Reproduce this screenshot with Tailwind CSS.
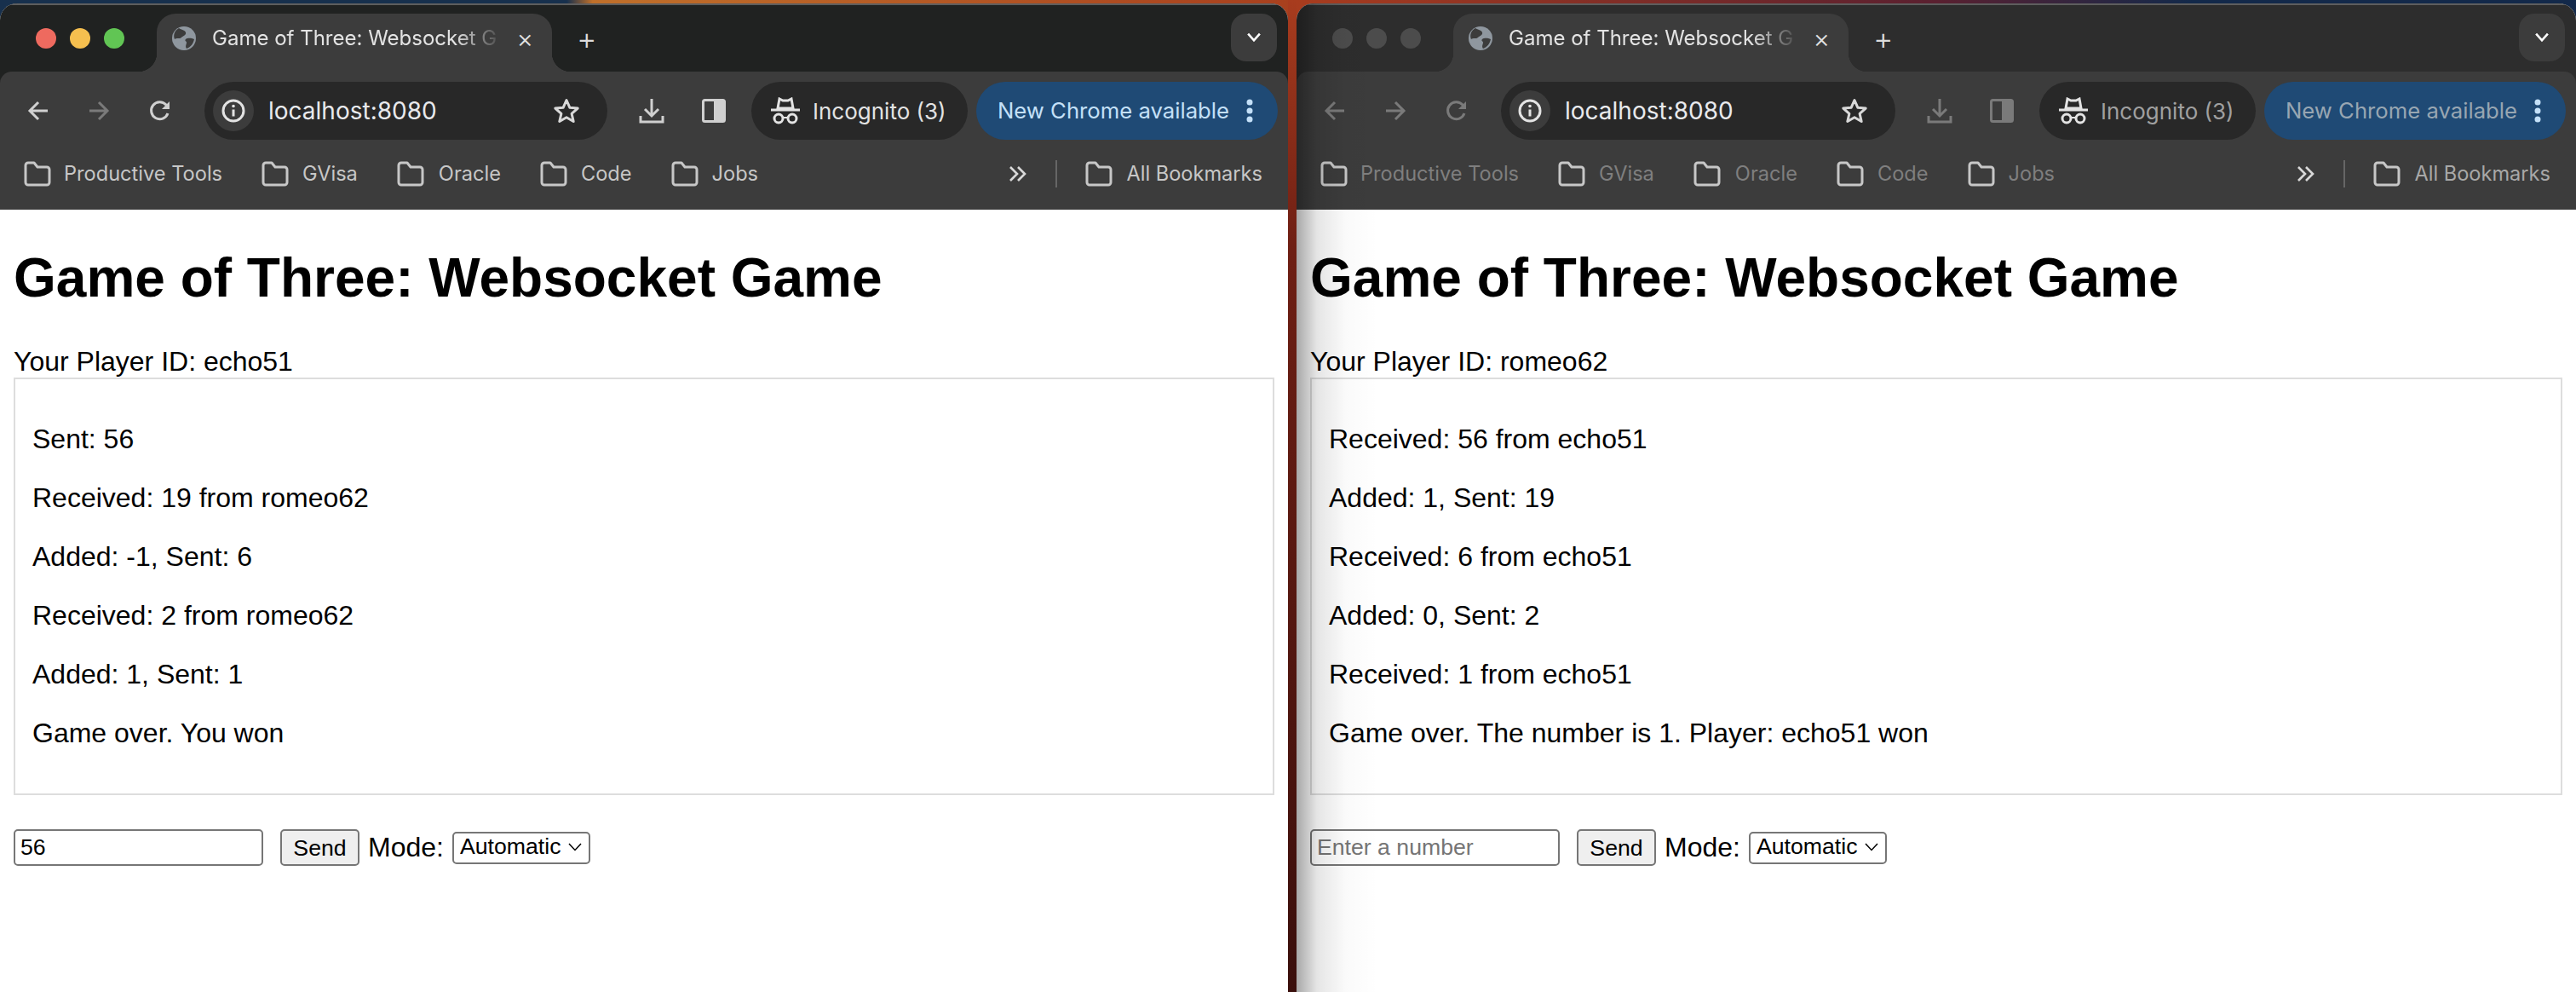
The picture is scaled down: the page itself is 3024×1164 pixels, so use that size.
<!DOCTYPE html>
<html lang="en">
<head>
    <meta charset="UTF-8">
    <title>Game of Three: Websocket Game</title>
    <script src="https://cdn.jsdelivr.net/npm/@tailwindcss/browser@4"></script>
</head>
<body class="bg-[#1b2f4a] overflow-hidden">
    <!-- icons shared by both windows -->
    <svg class="hidden">
        <symbol id="folder" viewBox="0 0 32 32"><path d="M2 6a3 3 0 0 1 3-3h7l4 5h11a3 3 0 0 1 3 3v15a3 3 0 0 1-3 3H5a3 3 0 0 1-3-3z" fill="none" stroke="currentColor" stroke-width="3" stroke-linejoin="round"/></symbol>
        <symbol id="globe" viewBox="0 0 28 28"><circle cx="14" cy="14" r="14" fill="#8f979f"/><path d="M8 2c3 2 7 2 8 5s-3 4-5 6-6 0-8 2C1 10 3 5 8 2zM16 15c3-2 7-1 10 0-1 5-4 9-9 11-2-3 0-5 0-7s-3-2-1-4z" fill="#3c3c3c"/></symbol>
        <symbol id="back" viewBox="0 0 28 28"><path d="M25 14H5M14 4 4 14l10 10" fill="none" stroke="currentColor" stroke-width="3"/></symbol>
        <symbol id="forward" viewBox="0 0 28 28"><path d="M3 14h20M14 4l10 10-10 10" fill="none" stroke="currentColor" stroke-width="3"/></symbol>
        <symbol id="reload" viewBox="0 0 28 28"><path d="M23 17a10 10 0 1 1-2-10l3 3" fill="none" stroke="currentColor" stroke-width="3"/><path d="M25 3v9h-9z" fill="currentColor"/></symbol>
        <symbol id="info" viewBox="0 0 28 28"><circle cx="14" cy="14" r="12" fill="none" stroke="currentColor" stroke-width="3"/><path d="M14 12.500v8" stroke="currentColor" stroke-width="3"/><circle cx="14" cy="8.500" r="1.800" fill="currentColor"/></symbol>
        <symbol id="star" viewBox="0 0 32 32"><path d="m16 3.500 3.800 8.700 9.400.9-7.100 6.200 2.100 9.200-8.200-4.800-8.200 4.800 2.100-9.200-7.100-6.200 9.400-.9z" fill="none" stroke="currentColor" stroke-width="3" stroke-linejoin="round"/></symbol>
        <symbol id="download" viewBox="0 0 32 32"><path d="M16 2v20M8 14l8 8 8-8M3 22v7h26v-7" fill="none" stroke="currentColor" stroke-width="3"/></symbol>
        <symbol id="panel" viewBox="0 0 28 28"><rect x="1.500" y="1.500" width="25" height="25" rx="2" fill="none" stroke="currentColor" stroke-width="3"/><rect x="14" y="2" width="12" height="24" fill="currentColor"/></symbol>
        <symbol id="incognito" viewBox="0 0 36 32"><path d="M9 13 11 2l4 2h6l4-2 2 11z" fill="none" stroke="currentColor" stroke-width="3"/><path d="M1 15h34" stroke="currentColor" stroke-width="3"/><circle cx="10" cy="25" r="5" fill="none" stroke="currentColor" stroke-width="3"/><circle cx="26" cy="25" r="5" fill="none" stroke="currentColor" stroke-width="3"/><path d="M15 24h6" stroke="currentColor" stroke-width="2"/></symbol>
        <symbol id="more" viewBox="0 0 8 28"><circle cx="4" cy="4" r="3.500" fill="currentColor"/><circle cx="4" cy="14" r="3.500" fill="currentColor"/><circle cx="4" cy="24" r="3.500" fill="currentColor"/></symbol>
        <symbol id="chev" viewBox="0 0 20 14"><path d="m2 2 8 9 8-9" fill="none" stroke="currentColor" stroke-width="3"/></symbol>
        <symbol id="chev-thin" viewBox="0 0 16 10"><path d="m1 1 7 7.500L15 1" fill="none" stroke="currentColor" stroke-width="1.500"/></symbol>
        <symbol id="dblchev" viewBox="0 0 24 20"><path d="m3 2 8 8-8 8M12 2l8 8-8 8" fill="none" stroke="currentColor" stroke-width="2.600"/></symbol>
    </svg>

    <div class="flex h-[1164px] w-[3024px]">
        <!-- left window -->
        <div class="w-[1512px] h-full flex flex-col pt-[4px] bg-[linear-gradient(to_right,#17304d_44%,#c0702a_46%,#a8401e)]">
            <div class="flex-1 flex flex-col bg-white rounded-t-[20px] overflow-hidden font-['Liberation_Sans',sans-serif] text-black">
                <div class="h-[242px] shrink-0 flex flex-col bg-[#202221] border-t-2 border-[#5e5e5e] font-['Inter',sans-serif]">
                    <div class="h-[78px] flex items-start pt-[10px] pl-[42px] pr-[13px] shrink-0">
                        <span class="w-6 h-6 mt-[17px] rounded-full bg-[#ee6a5f]"></span>
                        <span class="w-6 h-6 mt-[17px] ml-4 rounded-full bg-[#f5bf4f]"></span>
                        <span class="w-6 h-6 mt-[17px] ml-4 rounded-full bg-[#61c554]"></span>
                        <div class="relative ml-[38px] w-[464px] h-[68px] pl-[18px] pr-[22px] flex items-start pt-[15px] bg-[#3c3c3c] rounded-t-[22px]">
                            <span class="absolute -left-[22px] bottom-0 w-[22px] h-[22px] bg-[radial-gradient(circle_at_0_0,transparent_22px,#3c3c3c_22.500px)]"></span>
                            <span class="absolute -right-[22px] bottom-0 w-[22px] h-[22px] bg-[radial-gradient(circle_at_100%_0,transparent_22px,#3c3c3c_22.500px)]"></span>
                            <svg class="w-7 h-7 shrink-0"><use href="#globe"/></svg>
                            <span class="ml-[19px] w-[335px] whitespace-nowrap text-[24px] leading-[28px] text-[#e3e3e3] [mask-image:linear-gradient(to_right,black_85%,transparent_102%)]">Game of Three: Websocket G</span>
                            <span class="ml-auto text-[30px] leading-[28px] text-[#e3e3e3] font-light">×</span>
                        </div>
                        <span class="ml-[29px] mt-[11px] text-[36px] leading-[36px] font-light text-[#dddddd]">+</span>
                        <div class="ml-auto w-[54px] h-[56px] flex items-center justify-center rounded-[18px] bg-[#3c3c3c] text-white">
                            <svg class="w-[18px] h-[12px]"><use href="#chev"/></svg>
                        </div>
                    </div>
                    <div class="flex-1 flex flex-col bg-[#3c3c3c] rounded-t-[14px]">
                        <div class="h-[92px] shrink-0 flex items-center pl-[31px] pr-[12px] text-[#d0d0d0]">
                            <svg class="w-7 h-7"><use href="#back"/></svg>
                            <svg class="w-7 h-7 ml-[43px] text-[#7a7a7a]"><use href="#forward"/></svg>
                            <svg class="w-7 h-7 ml-[44px]"><use href="#reload"/></svg>
                            <div class="ml-[38px] w-[473px] h-[68px] flex items-center pl-[10px] pr-[32px] rounded-full bg-[#282828]">
                                <span class="w-[48px] h-[48px] flex items-center justify-center rounded-full bg-[#3c3c3c] text-[#e3e3e3]"><svg class="w-7 h-7"><use href="#info"/></svg></span>
                                <span class="ml-[17px] text-[28px] text-[#e8eaed]">localhost:8080</span>
                                <svg class="ml-auto w-8 h-8 text-[#d8d8d8]"><use href="#star"/></svg>
                            </div>
                            <svg class="ml-[36px] w-8 h-8"><use href="#download"/></svg>
                            <svg class="ml-[43px] w-7 h-7"><use href="#panel"/></svg>
                            <div class="ml-[30px] w-[254px] h-[68px] flex items-center pl-[22px] rounded-full bg-[#282828] text-[#e3e3e3]">
                                <svg class="w-9 h-8"><use href="#incognito"/></svg>
                                <span class="ml-[14px] text-[26px] whitespace-nowrap">Incognito (3)</span>
                            </div>
                            <div class="ml-[10px] flex-1 h-[68px] flex items-center pl-[25px] rounded-full bg-[#1f4a75] text-[#c4e0f8]">
                                <span class="text-[25.700px] whitespace-nowrap">New Chrome available</span>
                                <svg class="ml-[20px] w-2 h-7"><use href="#more"/></svg>
                            </div>
                        </div>
                        <div class="h-[56px] flex items-center pl-[28px] pr-[30px] text-[23.600px] text-[#c7c7c7] whitespace-nowrap">
                            <svg class="w-8 h-8"><use href="#folder"/></svg><span class="ml-[15px]">Productive Tools</span>
                            <svg class="w-8 h-8 ml-[46px]"><use href="#folder"/></svg><span class="ml-[16px]">GVisa</span>
                            <svg class="w-8 h-8 ml-[46px]"><use href="#folder"/></svg><span class="ml-[17px]">Oracle</span>
                            <svg class="w-8 h-8 ml-[46px]"><use href="#folder"/></svg><span class="ml-[16px]">Code</span>
                            <svg class="w-8 h-8 ml-[46px]"><use href="#folder"/></svg><span class="ml-[16px]">Jobs</span>
                            <svg class="ml-auto w-6 h-5 text-[#d8d8d8]"><use href="#dblchev"/></svg>
                            <span class="ml-[32px] w-[2px] h-8 bg-[#666666]"></span>
                            <svg class="w-8 h-8 ml-[33px]"><use href="#folder"/></svg><span class="ml-[16px]">All Bookmarks</span>
                        </div>
                    </div>
                </div>
                <div class="px-4">
                    <h1 class="mt-[43px] mb-[43px] text-[64px] leading-[74px] font-bold">Game of Three: Websocket Game</h1>
                    <div class="text-[32px] leading-[37px]">Your Player ID: echo51</div>
                    <div class="border-2 border-[#dddddd] px-5 py-[52px] flex flex-col gap-8 text-[32px] leading-[37px]">
                        <p>Sent: 56</p>
                        <p>Received: 19 from romeo62</p>
                        <p>Added: -1, Sent: 6</p>
                        <p>Received: 2 from romeo62</p>
                        <p>Added: 1, Sent: 1</p>
                        <p>Game over. You won</p>
                    </div>
                    <div class="mt-10 flex items-center">
                        <input type="text" value="56" placeholder="Enter a number" class="w-[293px] h-[43px] px-[6px] border-2 border-[#767676] rounded-[5px] text-[26.670px] text-black placeholder:text-[#757575]">
                        <button class="ml-5 w-[93px] h-[43px] border-2 border-[#767676] rounded-[5px] bg-[#efefef] text-[26.670px]">Send</button>
                        <span class="ml-[10px] text-[32px] leading-[37px]">Mode:</span>
                        <div class="relative ml-[10px] h-[38px]">
                            <select class="appearance-none w-[162px] h-[38px] pl-[7px] pb-[4px] leading-[26px] border-2 border-[#767676] rounded-[5px] bg-white text-[26.670px]"><option>Automatic</option></select>
                            <svg class="absolute right-[10px] top-[13px] w-4 h-[10px] text-black pointer-events-none"><use href="#chev-thin"/></svg>
                        </div>
                    </div>
                </div>
            </div>
        </div>

        <!-- gap between the windows, wallpaper shows through -->
        <div class="w-[10px] h-full bg-[linear-gradient(to_bottom,#a83c1e,#6e1f14_25%,#3a0f0c)]"></div>

        <!-- right window, inactive -->
        <div class="w-[1502px] h-full flex flex-col pt-[4px] bg-[linear-gradient(to_right,#a83c1e,#5a2030_50%,#13294a_70%)]">
            <div class="relative flex-1 flex flex-col bg-white rounded-t-[20px] overflow-hidden font-['Liberation_Sans',sans-serif] text-black">
                <div class="h-[242px] shrink-0 flex flex-col bg-[#2d2d2d] border-t-2 border-[#5e5e5e] font-['Inter',sans-serif]">
                    <div class="h-[78px] flex items-start pt-[10px] pl-[42px] pr-[13px] shrink-0">
                        <span class="w-6 h-6 mt-[17px] rounded-full bg-[#4c4c4c]"></span>
                        <span class="w-6 h-6 mt-[17px] ml-4 rounded-full bg-[#4c4c4c]"></span>
                        <span class="w-6 h-6 mt-[17px] ml-4 rounded-full bg-[#4c4c4c]"></span>
                        <div class="relative ml-[38px] w-[464px] h-[68px] pl-[18px] pr-[22px] flex items-start pt-[15px] bg-[#3c3c3c] rounded-t-[22px]">
                            <span class="absolute -left-[22px] bottom-0 w-[22px] h-[22px] bg-[radial-gradient(circle_at_0_0,transparent_22px,#3c3c3c_22.500px)]"></span>
                            <span class="absolute -right-[22px] bottom-0 w-[22px] h-[22px] bg-[radial-gradient(circle_at_100%_0,transparent_22px,#3c3c3c_22.500px)]"></span>
                            <svg class="w-7 h-7 shrink-0"><use href="#globe"/></svg>
                            <span class="ml-[19px] w-[335px] whitespace-nowrap text-[24px] leading-[28px] text-[#e3e3e3] [mask-image:linear-gradient(to_right,black_85%,transparent_102%)]">Game of Three: Websocket G</span>
                            <span class="ml-auto text-[30px] leading-[28px] text-[#e3e3e3] font-light">×</span>
                        </div>
                        <span class="ml-[29px] mt-[11px] text-[36px] leading-[36px] font-light text-[#dddddd]">+</span>
                        <div class="ml-auto w-[54px] h-[56px] flex items-center justify-center rounded-[18px] bg-[#3c3c3c] text-white">
                            <svg class="w-[18px] h-[12px]"><use href="#chev"/></svg>
                        </div>
                    </div>
                    <div class="flex-1 flex flex-col bg-[#3c3c3c] rounded-t-[14px]">
                        <div class="h-[92px] shrink-0 flex items-center pl-[31px] pr-[12px] text-[#7a7a7a]">
                            <svg class="w-7 h-7"><use href="#back"/></svg>
                            <svg class="w-7 h-7 ml-[43px]"><use href="#forward"/></svg>
                            <svg class="w-7 h-7 ml-[44px]"><use href="#reload"/></svg>
                            <div class="ml-[38px] w-[463px] h-[68px] flex items-center pl-[10px] pr-[32px] rounded-full bg-[#282828]">
                                <span class="w-[48px] h-[48px] flex items-center justify-center rounded-full bg-[#3c3c3c] text-[#e3e3e3]"><svg class="w-7 h-7"><use href="#info"/></svg></span>
                                <span class="ml-[17px] text-[28px] text-[#e8eaed]">localhost:8080</span>
                                <svg class="ml-auto w-8 h-8 text-[#d8d8d8]"><use href="#star"/></svg>
                            </div>
                            <svg class="ml-[36px] w-8 h-8"><use href="#download"/></svg>
                            <svg class="ml-[43px] w-7 h-7"><use href="#panel"/></svg>
                            <div class="ml-[30px] w-[254px] h-[68px] flex items-center pl-[22px] rounded-full bg-[#282828] text-[#e3e3e3]">
                                <svg class="w-9 h-8"><use href="#incognito"/></svg>
                                <span class="ml-[14px] text-[26px] whitespace-nowrap text-[#a0a0a0]">Incognito (3)</span>
                            </div>
                            <div class="ml-[10px] flex-1 h-[68px] flex items-center pl-[25px] rounded-full bg-[#1f4a75] text-[#c4e0f8]">
                                <span class="text-[25.700px] whitespace-nowrap text-[#98a6b2]">New Chrome available</span>
                                <svg class="ml-[20px] w-2 h-7"><use href="#more"/></svg>
                            </div>
                        </div>
                        <div class="h-[56px] flex items-center pl-[28px] pr-[30px] text-[23.600px] text-[#7f7f7f] whitespace-nowrap">
                            <svg class="w-8 h-8 text-[#c7c7c7]"><use href="#folder"/></svg><span class="ml-[15px]">Productive Tools</span>
                            <svg class="w-8 h-8 ml-[46px] text-[#c7c7c7]"><use href="#folder"/></svg><span class="ml-[16px]">GVisa</span>
                            <svg class="w-8 h-8 ml-[46px] text-[#c7c7c7]"><use href="#folder"/></svg><span class="ml-[17px]">Oracle</span>
                            <svg class="w-8 h-8 ml-[46px] text-[#c7c7c7]"><use href="#folder"/></svg><span class="ml-[16px]">Code</span>
                            <svg class="w-8 h-8 ml-[46px] text-[#c7c7c7]"><use href="#folder"/></svg><span class="ml-[16px]">Jobs</span>
                            <svg class="ml-auto w-6 h-5 text-[#d8d8d8]"><use href="#dblchev"/></svg>
                            <span class="ml-[32px] w-[2px] h-8 bg-[#666666]"></span>
                            <svg class="w-8 h-8 ml-[33px] text-[#c7c7c7]"><use href="#folder"/></svg><span class="ml-[16px] text-[#a8a8a8]">All Bookmarks</span>
                        </div>
                    </div>
                </div>
                <div class="px-4">
                    <h1 class="mt-[43px] mb-[43px] text-[64px] leading-[74px] font-bold">Game of Three: Websocket Game</h1>
                    <div class="text-[32px] leading-[37px]">Your Player ID: romeo62</div>
                    <div class="border-2 border-[#dddddd] px-5 py-[52px] flex flex-col gap-8 text-[32px] leading-[37px]">
                        <p>Received: 56 from echo51</p>
                        <p>Added: 1, Sent: 19</p>
                        <p>Received: 6 from echo51</p>
                        <p>Added: 0, Sent: 2</p>
                        <p>Received: 1 from echo51</p>
                        <p>Game over. The number is 1. Player: echo51 won</p>
                    </div>
                    <div class="mt-10 flex items-center">
                        <input type="text" placeholder="Enter a number" class="w-[293px] h-[43px] px-[6px] border-2 border-[#767676] rounded-[5px] text-[26.670px] text-black placeholder:text-[#757575]">
                        <button class="ml-5 w-[93px] h-[43px] border-2 border-[#767676] rounded-[5px] bg-[#efefef] text-[26.670px]">Send</button>
                        <span class="ml-[10px] text-[32px] leading-[37px]">Mode:</span>
                        <div class="relative ml-[10px] h-[38px]">
                            <select class="appearance-none w-[162px] h-[38px] pl-[7px] pb-[4px] leading-[26px] border-2 border-[#767676] rounded-[5px] bg-white text-[26.670px]"><option>Automatic</option></select>
                            <svg class="absolute right-[10px] top-[13px] w-4 h-[10px] text-black pointer-events-none"><use href="#chev-thin"/></svg>
                        </div>
                    </div>
                </div>
                <!-- drop shadow of the left window falling on this one -->
                <div class="absolute left-0 top-0 bottom-0 w-[96px] pointer-events-none bg-[linear-gradient(to_right,rgba(0,0,0,0.34),rgba(0,0,0,0.1)_25%,rgba(0,0,0,0.02)_60%,transparent)]"></div>
            </div>
        </div>
    </div>
</body>
</html>
